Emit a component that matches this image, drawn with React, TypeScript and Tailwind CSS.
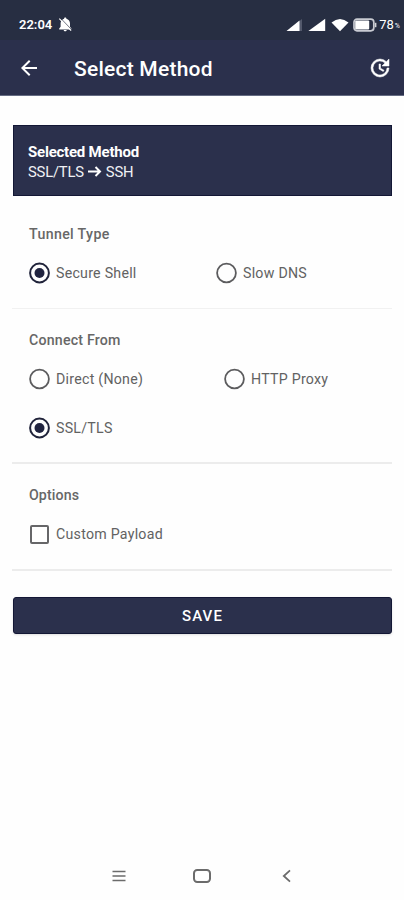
import { useState } from "react";
import { MdArrowBack } from "react-icons/md";

type OptionProps = {
    label: string;
    checked: boolean;
    onClick: () => void;
    textClass: string;
};

const RadioOption = ({ label, checked, onClick, textClass }: OptionProps) => (
    <button type="button" role="radio" aria-checked={checked} onClick={onClick} className="flex h-6 items-center">
        <svg viewBox="0 0 22 22" className="size-[22px]" fill="none">
            <circle cx="11.5" cy="11" r="9.4" stroke={checked ? "#20233a" : "#5c5c5e"} strokeWidth={checked ? 2 : 1.8} />
            {checked && <circle cx="11.5" cy="11" r="5" fill="#20233f" />}
        </svg>
        <span className={`mt-[2px] ml-[6px] text-[14.2px] whitespace-nowrap text-[#626262] ${textClass}`}>{label}</span>
    </button>
);

const StatusBar = () => (
    <div className="flex h-10 items-center justify-between bg-[#272e42] pt-[9px] pr-[4px] pl-[19px] text-white">
        <div className="flex items-center">
            <span className="w-[35px] text-[13px] font-semibold">22:04</span>
            <svg viewBox="0 0 15 15" className="ml-[4px] size-[15px]">
                <path d="M7.2.6c-.7 0-1.1.5-1.1 1.1C3.800 2.400 2.600 4.200 2.600 6.400v3.400L1.200 11.500v.9h12.200v-.9L12 9.800V6.400c0-2.200-1.300-4-3.600-4.700 0-.6-.4-1.100-1.200-1.100zM5.700 12.900h3c0 .8-.7 1.400-1.500 1.400s-1.500-.6-1.500-1.400z" fill="#fff" />
                <path d="M2.800 1.400l11 11.400" stroke="#272e42" strokeWidth=".7" />
                <path d="M1.300 1.600l11.800 12.100" stroke="#fff" strokeWidth="1.2" />
            </svg>
        </div>
        <div className="flex items-center">
            <svg viewBox="0 0 17 14" className="h-[14px] w-[17px]">
                <path d="M16 1v12H1z" fill="#53596c" />
                <path d="M13.5 2.5V13H.5z" fill="#fff" />
            </svg>
            <svg viewBox="0 0 18 14" className="ml-[5px] h-[14px] w-[18px]">
                <path d="M17.2.8V13H.4z" fill="#fff" />
            </svg>
            <svg viewBox="0 0 18 14" className="ml-[5px] h-[14px] w-[18px]">
                <path d="M.5 4.5Q9-2.5 17.5 4.5L9 13.2z" fill="#fff" />
            </svg>
            <svg viewBox="0 0 24 14" className="ml-[4px] h-[14px] w-[24px]" fill="none">
                <rect x="1" y="1.2" width="19.8" height="11.6" rx="3" stroke="#c9cbd2" strokeWidth="1.7" />
                <rect x="2.2" y="2.5" width="14" height="9" rx="1" fill="#fff" />
                <path d="M22.6 4.800v4.400" stroke="#d3d5da" strokeWidth="1.6" />
            </svg>
            <span className="ml-[2px] text-[13px]">78</span>
            <span className="mt-[4px] ml-px text-[7px]">%</span>
        </div>
    </div>
);

const App = () => {
    const [tunnel, setTunnel] = useState("ssh");
    const [connect, setConnect] = useState("ssl");
    const [payload, setPayload] = useState(false);

    return (
        <div className="flex h-[900px] w-[404px] flex-col overflow-hidden bg-[#fefefe] font-[Roboto,sans-serif]">
            <StatusBar />
            <header className="flex h-14 shrink-0 items-center border-b border-[#646b82] bg-[#2b304c] pt-px pr-[12px] pl-[17px] text-white">
                <MdArrowBack className="size-6" />
                <h1 className="mt-[2px] ml-[33px] text-[21px] leading-6 font-medium tracking-[0.23px]">Select Method</h1>
                <svg viewBox="0 0 24 24" className="ml-auto size-6" fill="currentColor" stroke="currentColor" strokeWidth=".5">
                    <path d="M21 10V3l-2.640 2.640A8.940 8.940 0 0 0 12 3a9 9 0 1 0 9 9h-2a7 7 0 1 1-2.050-4.950L14 10zM11 8v5l4.250 2.520.77-1.280-3.520-2.090V8z" />
                </svg>
            </header>

            <main className="flex flex-col px-3 pt-[29px]">
                <div className="ml-px h-[71px] w-[379px] border border-[#131735] bg-[#2b304c] px-[14px] pt-[16px] leading-5 text-white">
                    <p className="text-[15px] font-bold tracking-[-0.22px]">Selected Method</p>
                    <div className="flex items-center text-[14.8px] tracking-[-0.2px] text-[#f0f1f5]">
                        <span>SSL/TLS</span>
                        <svg viewBox="0 0 14 12" className="mx-[4px] h-3 w-[14px]" fill="none" stroke="#fff" strokeWidth="2">
                            <path d="M0 5.500h12M7.500 1l4.500 4.500L7.500 10" />
                        </svg>
                        <span>SSH</span>
                    </div>
                </div>

                <section className="h-[113px] border-b border-[#f1f1f1] pt-[28px] pl-[17px]">
                    <h2 className="text-[14.2px] leading-5 font-medium tracking-[0.35px] text-[#676767]">Tunnel Type</h2>
                    <div className="mt-[17px] flex">
                        <div className="-ml-px w-[187px]">
                            <RadioOption label="Secure Shell" checked={tunnel === "ssh"} onClick={() => setTunnel("ssh")} textClass="tracking-[0.25px]" />
                        </div>
                        <RadioOption label="Slow DNS" checked={tunnel === "dns"} onClick={() => setTunnel("dns")} textClass="tracking-[0.25px]" />
                    </div>
                </section>

                <section className="h-[155px] border-b-2 border-[#ececec] pt-[21px] pl-[17px]">
                    <h2 className="text-[14.2px] leading-5 font-medium tracking-[0.2px] text-[#676767]">Connect From</h2>
                    <div className="mt-[17px] flex">
                        <div className="-ml-px w-[195px]">
                            <RadioOption label="Direct (None)" checked={connect === "direct"} onClick={() => setConnect("direct")} textClass="tracking-[0.25px]" />
                        </div>
                        <RadioOption label="HTTP Proxy" checked={connect === "proxy"} onClick={() => setConnect("proxy")} textClass="tracking-[0.25px]" />
                    </div>
                    <div className="mt-[25px] -ml-px flex">
                        <RadioOption label="SSL/TLS" checked={connect === "ssl"} onClick={() => setConnect("ssl")} textClass="tracking-[0.25px]" />
                    </div>
                </section>

                <section className="h-[107px] border-b-2 border-[#ececec] pt-[21px] pl-[17px]">
                    <h2 className="text-[14.2px] leading-5 font-medium tracking-[0.1px] text-[#676767]">Options</h2>
                    <button
                        type="button"
                        role="checkbox"
                        aria-checked={payload}
                        onClick={() => setPayload(!payload)}
                        className="mt-[17px] flex h-6 items-center"
                    >
                        <span className={`ml-px size-[19px] rounded-[2px] border-2 border-[#666668] ${payload ? "bg-[#20233f]" : ""}`} />
                        <span className="mt-[2px] ml-[7px] text-[14.2px] tracking-[0.25px] text-[#626262]">Custom Payload</span>
                    </button>
                </section>

                <button
                    type="button"
                    className="mt-[26px] ml-px h-[37px] w-[379px] rounded-[3px] border border-[#131735] bg-[#2b304c] pt-px text-[15px] font-medium tracking-[1.1px] text-white shadow-sm"
                >
                    SAVE
                </button>
            </main>

            <nav className="mt-auto flex h-12 items-center text-[#6b6b6b]">
                <svg viewBox="0 0 14 12" className="ml-[112px] h-3 w-[14px]" stroke="currentColor" strokeWidth="1.7">
                    <path d="M.5 1.500h13M.5 6h13M.5 10.500h13" />
                </svg>
                <svg viewBox="0 0 18 14" className="ml-[67px] h-[14px] w-[18px]" fill="none" stroke="currentColor" strokeWidth="2">
                    <rect x="1" y="1" width="16" height="12" rx="3.2" />
                </svg>
                <svg viewBox="0 0 9 14" className="ml-[71px] h-[14px] w-[9px]" fill="none" stroke="currentColor" strokeWidth="1.8">
                    <path d="M8 1.300L1.800 7 8 12.700" />
                </svg>
            </nav>
        </div>
    );
};

export default App;
